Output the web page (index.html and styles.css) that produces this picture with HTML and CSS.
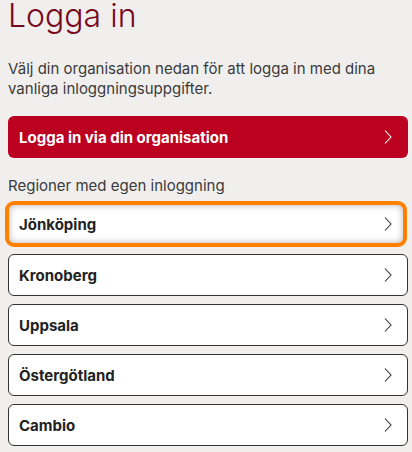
FILE: index.html
```html
<!DOCTYPE html>
<html lang="sv">
<head>
  <meta charset="UTF-8" />
  <meta name="viewport" content="width=device-width, initial-scale=1.0"/>
  <title>Logga in</title>
  <link rel="stylesheet" href="styles.css">
</head>
<body>

<h1 class="title">Logga in</h1>

<p class="intro">Välj din organisation nedan för att logga in med dina vanliga inloggningsuppgifter.</p>

<a class="btn-primary" href="#">
  <span>Logga in via din organisation</span>
  <svg class="chev" viewBox="0 0 8 16" width="8" height="16"><path d="M1 1.5l6 6.5-6 6.5" /></svg>
</a>

<p class="label">Regioner med egen inloggning</p>

<ul class="regions">
  <li><a class="region focused" href="#"><span>Jönköping</span><svg class="chev" viewBox="0 0 8 16" width="8" height="16"><path d="M1 1.5l6 6.5-6 6.5" /></svg></a></li>
  <li><a class="region" href="#"><span>Kronoberg</span><svg class="chev" viewBox="0 0 8 16" width="8" height="16"><path d="M1 1.5l6 6.5-6 6.5" /></svg></a></li>
  <li><a class="region" href="#"><span>Uppsala</span><svg class="chev" viewBox="0 0 8 16" width="8" height="16"><path d="M1 1.5l6 6.5-6 6.5" /></svg></a></li>
  <li><a class="region" href="#"><span>Östergötland</span><svg class="chev" viewBox="0 0 8 16" width="8" height="16"><path d="M1 1.5l6 6.5-6 6.5" /></svg></a></li>
  <li><a class="region" href="#"><span>Cambio</span><svg class="chev" viewBox="0 0 8 16" width="8" height="16"><path d="M1 1.5l6 6.5-6 6.5" /></svg></a></li>
</ul>

</body>
</html>
```

FILE: styles.css
```css
body {
  font-family: Inter, sans-serif;
  background: #f1efee;
  margin: 0;
  padding: 0 4px 0 8px;
  color: #333;
}

.title {
  font-weight: 300;
  font-size: 32px;
  line-height: 32px;
  color: #76091d;
  margin: 0;
}

.intro {
  font-size: 15px;
  line-height: 20px;
  margin: 27px 0 17px;
  color: #3a3a3a;
}

.btn-primary {
  display: flex;
  align-items: center;
  justify-content: space-between;
  height: 42px;
  padding: 0 16px 0 11px;
  background: #bc0020;
  border-radius: 6px;
  color: #fff;
  font-weight: 700;
  font-size: 15px;
  text-decoration: none;
}

.chev {
  fill: none;
  stroke: currentColor;
  stroke-width: 1.1;
}

.label {
  font-size: 15px;
  line-height: 20px;
  margin: 18px 0 8px;
  color: #3a3a3a;
}

.regions {
  list-style: none;
  margin: 0;
  padding: 0;
  display: flex;
  flex-direction: column;
  gap: 8px;
}

.region {
  box-sizing: border-box;
  display: flex;
  align-items: center;
  justify-content: space-between;
  height: 42px;
  padding: 0 15px 0 10px;
  background: #fff;
  border: 1px solid #333;
  border-radius: 6px;
  color: #222;
  font-weight: 700;
  font-size: 15px;
  text-decoration: none;
}

.region .chev {
  color: #333;
}

.region.focused {
  height: 46px;
  margin: -3px 1px -1px -3px;
  padding: 0 11px 0 10px;
  border: 4px solid #ff8000;
  border-radius: 9px;
  box-shadow: inset 0 0 7px rgba(0, 0, 0, 0.3);
}
```
